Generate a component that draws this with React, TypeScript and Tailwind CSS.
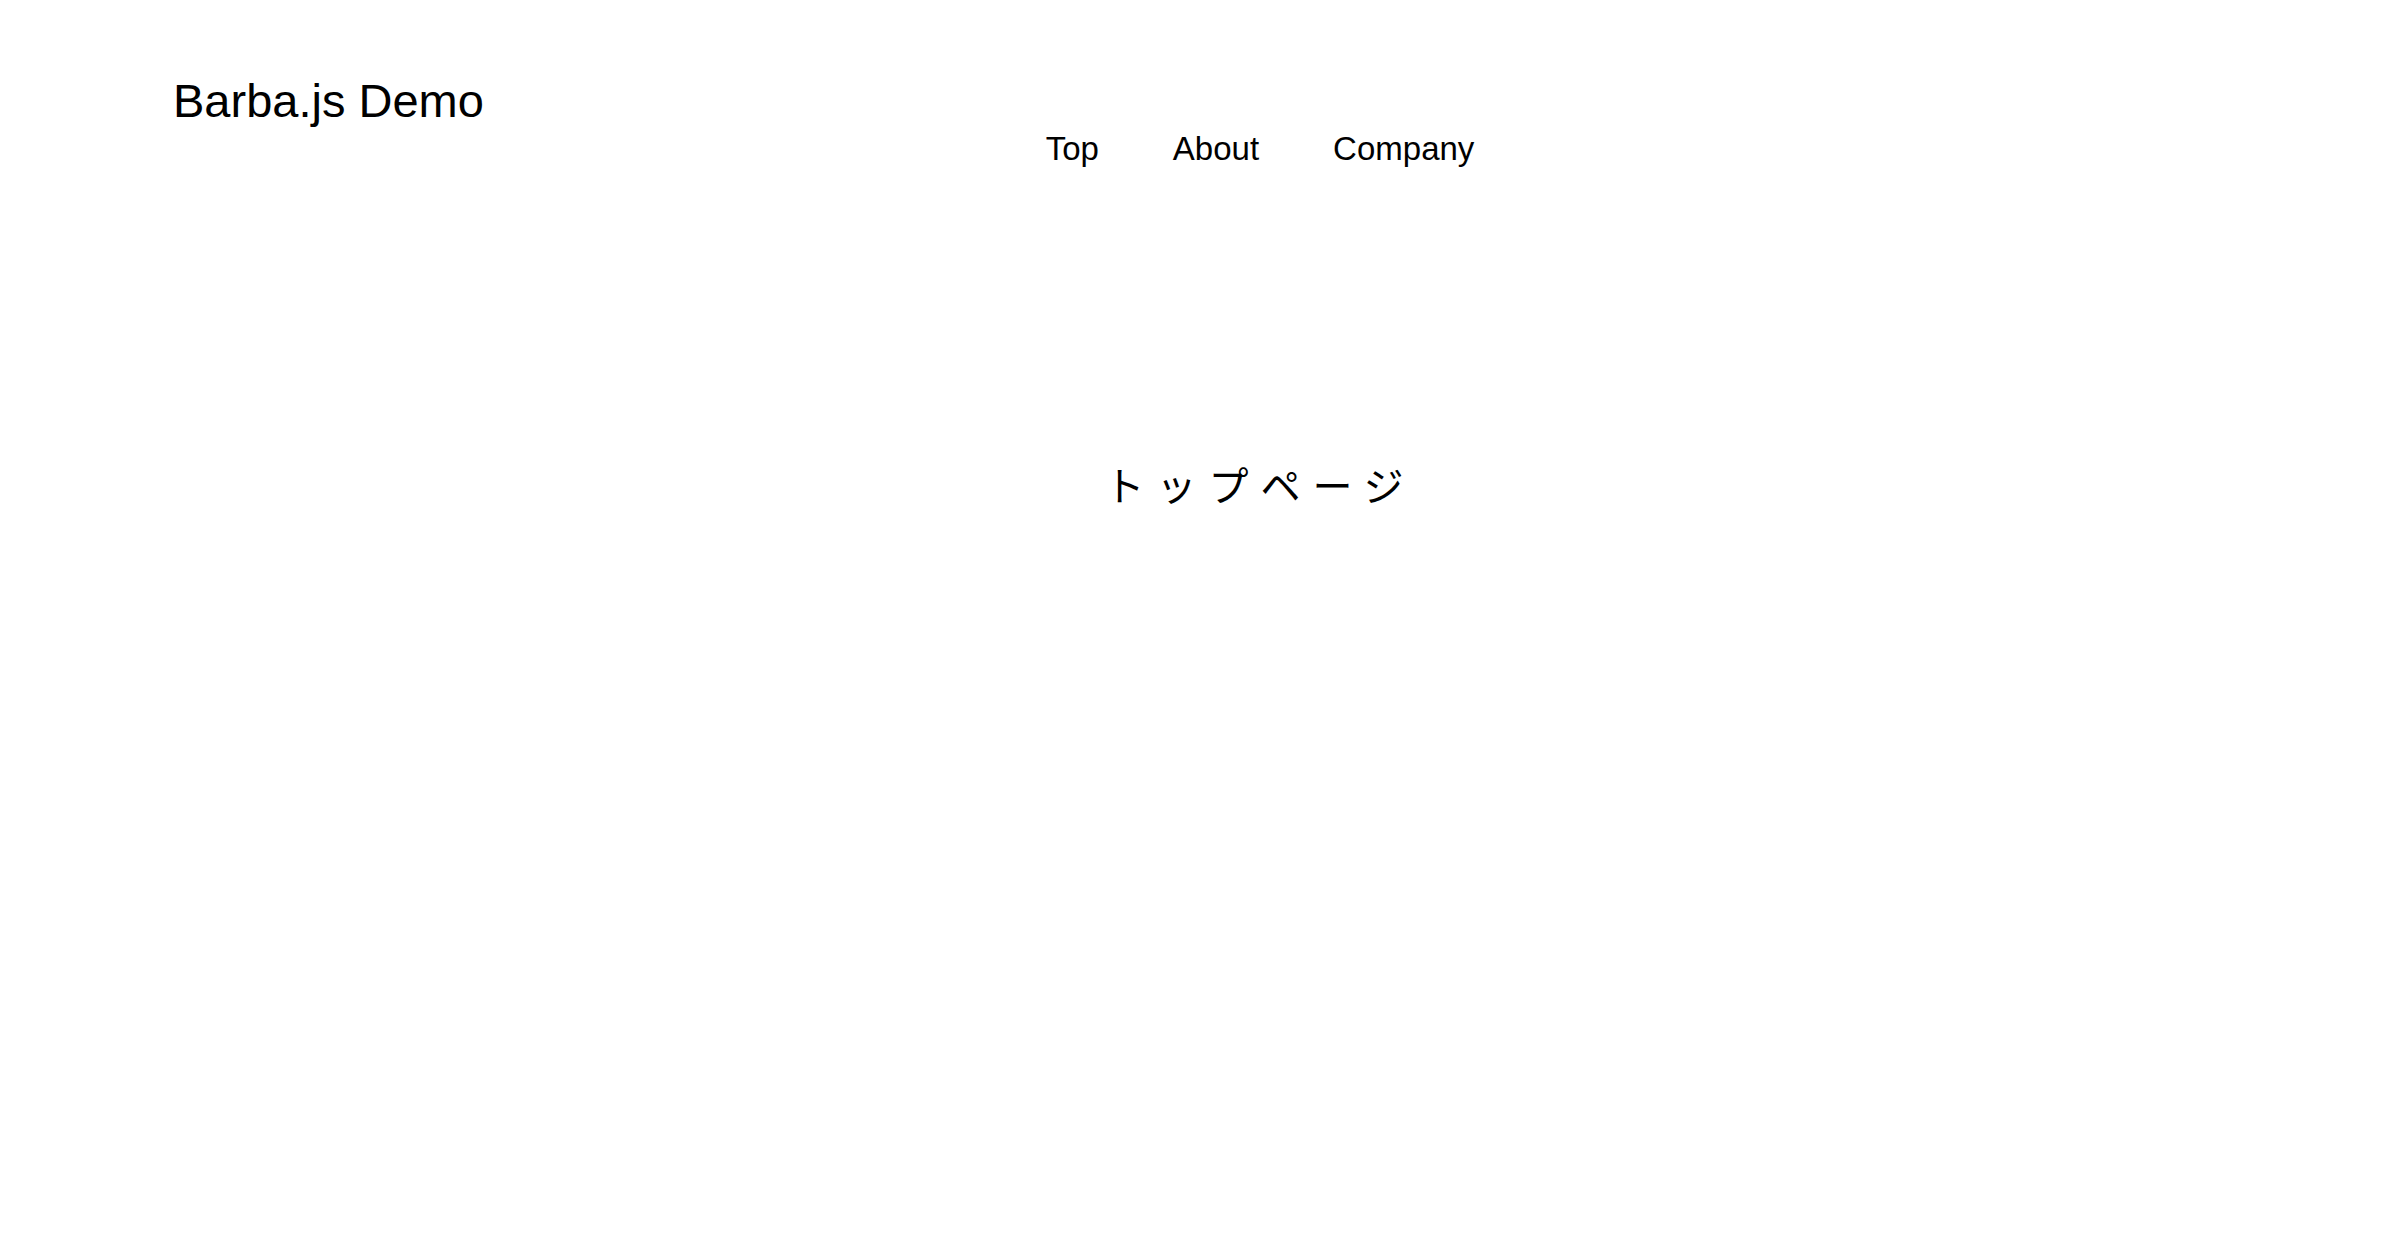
import React from 'react';

const links = ['Top', 'About', 'Company'];

export default function App() {
  return (
    <div className="min-h-screen bg-white text-black pl-[120px] font-['Liberation_Sans','Noto_Sans_CJK_JP',sans-serif]">
      <header>
        <h1 className="ml-[53px] pt-[77px] text-[47px] leading-none font-normal">Barba.js Demo</h1>
        <nav className="mt-[8px] flex justify-center gap-[74px] text-[33px] leading-none">
          {links.map(l => (
            <a key={l} href="#" className="text-black no-underline">
              {l}
            </a>
          ))}
        </nav>
      </header>
      <main className="mt-[299px] text-center">
        <h2 className="text-[40px] leading-none font-normal tracking-[12px] font-['Noto_Sans_CJK_JP',sans-serif]">
          トップページ
        </h2>
      </main>
    </div>
  );
}
